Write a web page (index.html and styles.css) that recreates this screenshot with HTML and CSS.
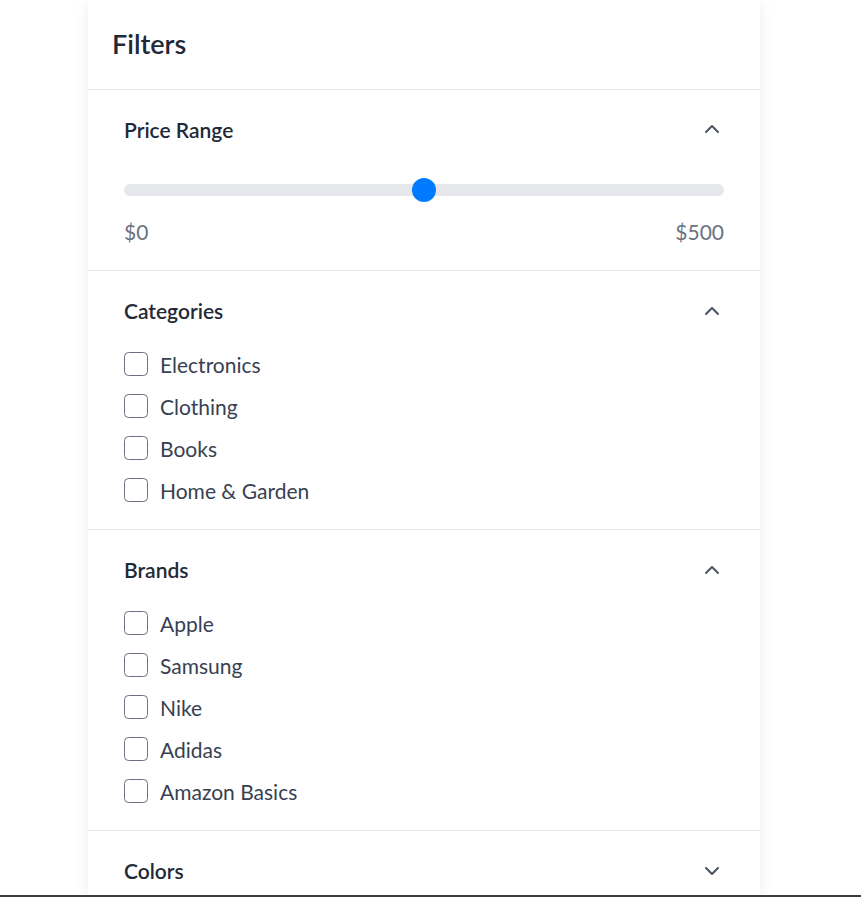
FILE: index.html
```html
<!DOCTYPE html>
<html lang="en">
<head>
<meta charset="utf-8">
<title>Filters</title>
<link rel="stylesheet" href="styles.css">
</head>
<body>
<div class="page">
  <aside class="card">
    <header class="card-header">
      <h2 class="card-title">Filters</h2>
    </header>

    <section class="section">
      <div class="section-head">
        <h3 class="section-title">Price Range</h3>
        <svg class="chev" viewBox="0 0 24 24"><polyline points="18 15 12 9 6 15"/></svg>
      </div>
      <div class="slider">
        <input class="range" type="range" min="0" max="500" value="250">
      </div>
      <div class="range-labels"><span>$0</span><span>$500</span></div>
    </section>

    <section class="section">
      <div class="section-head">
        <h3 class="section-title">Categories</h3>
        <svg class="chev" viewBox="0 0 24 24"><polyline points="18 15 12 9 6 15"/></svg>
      </div>
      <ul class="options">
        <li class="option"><span class="box"></span><span>Electronics</span></li>
        <li class="option"><span class="box"></span><span>Clothing</span></li>
        <li class="option"><span class="box"></span><span>Books</span></li>
        <li class="option"><span class="box"></span><span>Home &amp; Garden</span></li>
      </ul>
    </section>

    <section class="section">
      <div class="section-head">
        <h3 class="section-title">Brands</h3>
        <svg class="chev" viewBox="0 0 24 24"><polyline points="18 15 12 9 6 15"/></svg>
      </div>
      <ul class="options">
        <li class="option"><span class="box"></span><span>Apple</span></li>
        <li class="option"><span class="box"></span><span>Samsung</span></li>
        <li class="option"><span class="box"></span><span>Nike</span></li>
        <li class="option"><span class="box"></span><span>Adidas</span></li>
        <li class="option"><span class="box"></span><span>Amazon Basics</span></li>
      </ul>
    </section>

    <section class="section">
      <div class="section-head">
        <h3 class="section-title">Colors</h3>
        <svg class="chev" viewBox="0 0 24 24"><polyline points="6 9 12 15 18 9"/></svg>
      </div>
    </section>
  </aside>
</div>
<div class="bottom-bar"></div>
</body>
</html>
```

FILE: styles.css
```css
* { box-sizing: border-box; }

html, body {
  margin: 0;
  padding: 0;
  background: #ffffff;
}

body {
  font-family: Lato, "Open Sans", "Liberation Sans", sans-serif;
  color: #374151;
}

.page {
  padding-left: 88px;
}

.card {
  width: 672px;
  background: #ffffff;
  box-shadow: 0 3px 14px rgba(0, 0, 0, 0.07);
}

.card-header {
  padding: 24px;
  border-bottom: 1px solid #e5e7eb;
}

.card-title {
  margin: 0;
  font-size: 27px;
  line-height: 40.5px;
  font-weight: 600;
  color: #1f2937;
}

.section {
  padding: 24px 36px 23px;
  border-bottom: 1px solid #e5e7eb;
}

.section-head {
  display: flex;
  align-items: center;
  justify-content: space-between;
}

.section-title {
  margin: 0;
  font-size: 21px;
  line-height: 31.5px;
  font-weight: 600;
  color: #1f2937;
}

.chev {
  width: 24px;
  height: 24px;
  fill: none;
  stroke: #4b5563;
  stroke-width: 2;
  stroke-linecap: round;
  stroke-linejoin: round;
}

.slider {
  margin-top: 24px;
  padding: 9px 0 13.5px;
}

.range {
  -webkit-appearance: none;
  appearance: none;
  display: block;
  width: 100%;
  height: 24px;
  margin: 0;
  background: transparent;
}

.range::-webkit-slider-runnable-track {
  height: 12px;
  border-radius: 6px;
  background: #e5e7eb;
}

.range::-webkit-slider-thumb {
  -webkit-appearance: none;
  appearance: none;
  width: 24px;
  height: 24px;
  margin-top: -6px;
  border-radius: 50%;
  background: #007bff;
  border: none;
}

.range-labels {
  display: flex;
  justify-content: space-between;
  font-size: 21px;
  line-height: 31.5px;
  color: #6b7280;
}

.options {
  list-style: none;
  margin: 22px 0 0;
  padding: 0;
  display: flex;
  flex-direction: column;
  gap: 10.5px;
}

.option {
  display: flex;
  align-items: center;
  gap: 12px;
  font-size: 21px;
  line-height: 31.5px;
  color: #374151;
}

.box {
  width: 24px;
  height: 24px;
  flex: none;
  border: 1.5px solid #6b7280;
  border-radius: 4.5px;
  background: #ffffff;
}

.bottom-bar {
  position: fixed;
  left: 0;
  right: 0;
  bottom: 0;
  height: 2px;
  background: #3d3d3d;
}
```
